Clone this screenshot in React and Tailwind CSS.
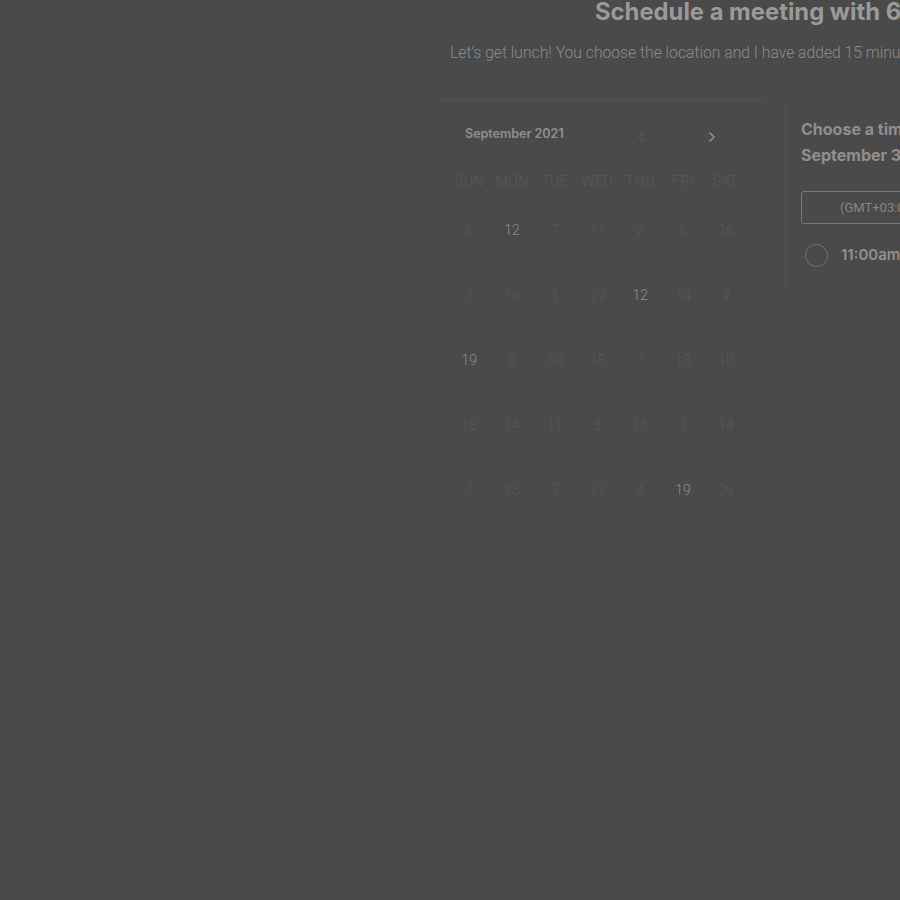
import { ChevronLeft, ChevronRight } from 'lucide-react'

const DAYS = ['SUN', 'MON', 'TUE', 'WED', 'THU', 'FRI', 'SAT']

// [value, bright]
const WEEKS = [
  [[6], [12, 1], [7], [17], [2], [6], [26]],
  [[7], [16], [1], [29], [12, 1], [14], [9]],
  [[19, 1], [8], [30], [18], [7], [18], [10]],
  [[18], [14], [11], [8], [16], [1], [14]],
  [[7], [25], [7], [17], [4], [19, 1], [26]],
]

function Calendar() {
  return (
    <div className="w-[326px] shrink-0 border-t border-[#525252] pt-[18px]">
      <div className="flex items-center h-[30px]">
        <span className="ml-[25px] text-[12.5px] font-semibold text-[#8f8f8f] font-['Inter',sans-serif]">
          September 2021
        </span>
        <ChevronLeft size={16} strokeWidth={2} className="ml-[69px] mt-[6px] text-[#575757]" />
        <ChevronRight size={16} strokeWidth={2.5} className="ml-[55px] mt-[6px] text-[#8f8f8f]" />
      </div>
      <div className="grid grid-cols-7 w-[299px] ml-[8px] mt-[22px] font-['Roboto',sans-serif] font-light">
        {DAYS.map((d) => (
          <div key={d} className="text-center text-[14px] tracking-[0.5px] text-[#595959] leading-[20px]">
            {d}
          </div>
        ))}
        {WEEKS.map((w, i) =>
          w.map(([n, b], j) => (
            <div
              key={`${i}-${j}`}
              className={`text-center text-[14px] h-[65px] pt-[29px] leading-[20px] ${
                b ? 'text-[#8c8c8c]' : 'text-[#575757]'
              }`}
            >
              {n}
            </div>
          ))
        )}
      </div>
    </div>
  )
}

function TimePanel() {
  return (
    <div className="flex shrink-0">
      <div className="w-px h-[190px] bg-[#525252] ml-[19px]" />
      <div className="pl-[15px] pt-[16px] font-['Inter',sans-serif] whitespace-nowrap">
        <div className="text-[16px] font-bold text-[#8f8f8f] leading-[26px]">Choose a time for your meeting</div>
        <div className="text-[16px] font-bold text-[#8f8f8f] leading-[26px]">September 30, 2021</div>
        <div className="mt-[23px] w-[220px] h-[33px] border border-[#7a7a7a] rounded-[3px] flex items-center pl-[38px] text-[13px] text-[#858585] font-['Roboto',sans-serif]">
          (GMT+03:00) Nairobi
        </div>
        <div className="mt-[20px] flex items-center">
          <div className="ml-[4px] w-[23px] h-[23px] rounded-full border border-[#707070]" />
          <span className="ml-[13px] text-[15px] font-semibold text-[#8f8f8f]">11:00am</span>
        </div>
      </div>
    </div>
  )
}

export default function App() {
  return (
    <div className="w-[900px] h-[900px] bg-[#4a4a4a] overflow-hidden">
      <div className="ml-[440px] w-[900px]">
        <h1 className="pl-[155px] text-[23.8px] leading-[24px] font-bold text-[#9a9a9a] font-['Inter',sans-serif] whitespace-nowrap">
          Schedule a meeting with 6ixBits Team
        </h1>
        <p className="mt-[19px] pl-[10px] text-[15.7px] leading-[20px] font-light text-[#8a8a8a] font-['Roboto',sans-serif] whitespace-nowrap">
          Let’s get lunch! You choose the location and I have added 15 minutes to the meeting for travel.
        </p>
        <div className="flex mt-[37px]">
          <Calendar />
          <TimePanel />
        </div>
      </div>
    </div>
  )
}
